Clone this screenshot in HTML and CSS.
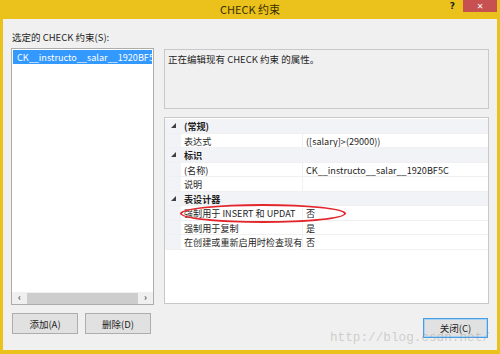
FILE: index.html
```html
<!DOCTYPE html>
<html>
<head>
<meta charset="utf-8">
<link rel="stylesheet" href="styles.css">
</head>
<body>
<div class="window">
  <div class="titlebar">
    <span class="title">CHECK 约束</span>
    <span class="help">?</span>
    <span class="close">✕</span>
  </div>
  <div class="client">
    <div class="leftcol">
      <div class="label">选定的 CHECK 约束(S):</div>
      <div class="listbox">
        <div class="items">
          <div class="item selected">CK__instructo__salar__1920BF5C</div>
        </div>
        <div class="hscroll">
          <span class="arrow">‹</span>
          <span class="thumb"></span>
          <span class="arrow">›</span>
        </div>
      </div>
      <div class="btnrow">
        <button class="btn">添加(A)</button>
        <button class="btn">删除(D)</button>
      </div>
    </div>
    <div class="rightcol">
      <div class="desc">正在编辑现有 CHECK 约束 的属性。</div>
      <div class="propgrid">
        <div class="row cat"><span class="gut"><svg width="5" height="5" viewBox="0 0 5 5"><polygon points="5,0 5,5 0,5" fill="#404040"/></svg></span><span class="name">(常规)</span></div>
        <div class="row"><span class="gut"></span><span class="name">表达式</span><span class="val">([salary]&gt;(29000))</span></div>
        <div class="row cat"><span class="gut"><svg width="5" height="5" viewBox="0 0 5 5"><polygon points="5,0 5,5 0,5" fill="#404040"/></svg></span><span class="name">标识</span></div>
        <div class="row"><span class="gut"></span><span class="name">(名称)</span><span class="val">CK__instructo__salar__1920BF5C</span></div>
        <div class="row"><span class="gut"></span><span class="name">说明</span><span class="val"></span></div>
        <div class="row cat"><span class="gut"><svg width="5" height="5" viewBox="0 0 5 5"><polygon points="5,0 5,5 0,5" fill="#404040"/></svg></span><span class="name">表设计器</span></div>
        <div class="row"><span class="gut"></span><span class="name">强制用于 INSERT 和 UPDAT</span><span class="val">否</span></div>
        <div class="row"><span class="gut"></span><span class="name">强制用于复制</span><span class="val">是</span></div>
        <div class="row"><span class="gut"></span><span class="name">在创建或重新启用时检查现有</span><span class="val">否</span></div>
      </div>
      <div class="closerow">
        <button class="btn default">关闭(C)</button>
      </div>
    </div>
  </div>
</div>
<div class="ellipse"></div>
<div class="watermark">http://blog.csdn.net/</div>
</body>
</html>
```
FILE: styles.css
```css
* { box-sizing: border-box; }
html, body {
  margin: 0;
  padding: 0;
  width: 500px;
  height: 354px;
  overflow: hidden;
  background: #ebc11b;
  font-family: "Noto Sans CJK SC", "Noto Sans", sans-serif;
  font-size: 9.5px;
  color: #1e1e1e;
}
body { position: relative; }
.window {
  display: flex;
  flex-direction: column;
  height: 354px;
  padding: 0 3px 4px 3px;
}
.titlebar {
  height: 19px;
  position: relative;
  display: flex;
  align-items: center;
  justify-content: center;
}
.title {
  font-size: 11px;
  color: #3a3000;
  line-height: 17px;
  margin-top: -1px;
}
.help {
  position: absolute;
  right: 42px;
  top: 1px;
  font-family: "DejaVu Sans", sans-serif;
  font-weight: bold;
  font-size: 9px;
  color: #222;
}
.close {
  position: absolute;
  right: 0;
  top: 0;
  width: 34px;
  height: 12px;
  background: #c75050;
  color: #fff;
  font-size: 8px;
  font-weight: bold;
  font-family: "DejaVu Sans", sans-serif;
  display: flex;
  align-items: center;
  justify-content: center;
}
.client {
  flex: 1;
  background: #f0f0f0;
  display: flex;
  gap: 10px;
  padding: 11px 8px 0 8px;
}
.leftcol {
  width: 143px;
  display: flex;
  flex-direction: column;
}
.label {
  height: 18px;
  line-height: 14px;
  padding-left: 1px;
}
.listbox {
  height: 257px;
  background: #fff;
  border: 1px solid #acacac;
  display: flex;
  flex-direction: column;
  padding: 1px;
}
.items { flex: 1; overflow: hidden; }
.item {
  height: 14px;
  line-height: 14px;
  padding-left: 4px;
  white-space: nowrap;
  overflow: hidden;
  font-size: 9.1px;
}
.item.selected { background: #3399ff; color: #fff; }
.hscroll {
  height: 12px;
  display: flex;
  align-items: center;
  background: #f0f0f0;
  margin: 0 -1px -1px -1px;
}
.arrow {
  width: 15px;
  text-align: center;
  font-size: 9px;
  color: #555;
  line-height: 12px;
  font-weight: bold;
}
.thumb {
  flex: 1;
  height: 11px;
  background: #cdcdcd;
}
.btnrow {
  margin-top: 8px;
  display: flex;
  gap: 7px;
  padding-left: 1px;
}
.btn {
  width: 66px;
  height: 21px;
  background: #e1e1e1;
  border: 1px solid #adadad;
  font-family: "Noto Sans CJK SC", "Noto Sans", sans-serif;
  font-size: 9.5px;
  color: #1e1e1e;
  padding: 0;
}
.btn.default {
  border-color: #4a9de3;
  box-shadow: inset 0 0 0 1px #a9d3f5;
  width: 65px;
  height: 20px;
}
.rightcol {
  flex: 1;
  display: flex;
  flex-direction: column;
  padding-top: 19px;
}
.desc {
  height: 60px;
  border: 1px solid #c8c8c8;
  padding: 2px 3px;
  line-height: 14px;
}
.propgrid {
  margin-top: 8px;
  height: 187px;
  border: 1px solid #c8c8c8;
  background: #fff;
  padding-top: 1px;
  font-size: 9.1px;
}
.row {
  display: flex;
  height: 14.5px;
  line-height: 14.5px;
  border-bottom: 1px solid #f0f0f0;
}
.gut {
  width: 16px;
  flex: none;
  background: #f2f3f7;
  display: flex;
  align-items: center;
  justify-content: center;
}
.name {
  width: 122px;
  flex: none;
  padding-left: 3px;
  white-space: nowrap;
  overflow: hidden;
  border-right: 1px solid #f0f0f0;
}
.val {
  flex: 1;
  padding-left: 3px;
  white-space: nowrap;
  overflow: hidden;
}
.row.cat { background: #f2f3f7; }
.row.cat .name { font-weight: bold; border-right: none; }
.closerow {
  display: flex;
  justify-content: flex-end;
  margin-top: 14px;
  padding-right: 1px;
}
.ellipse {
  position: absolute;
  left: 180px;
  top: 204px;
  width: 166px;
  height: 19px;
  border: 2px solid #e3262b;
  border-radius: 50%;
}
.watermark {
  position: absolute;
  left: 330px;
  top: 330px;
  font-family: "Liberation Mono", monospace;
  font-size: 12.7px;
  color: rgba(150, 150, 150, 0.4);
  letter-spacing: 0;
}
```
